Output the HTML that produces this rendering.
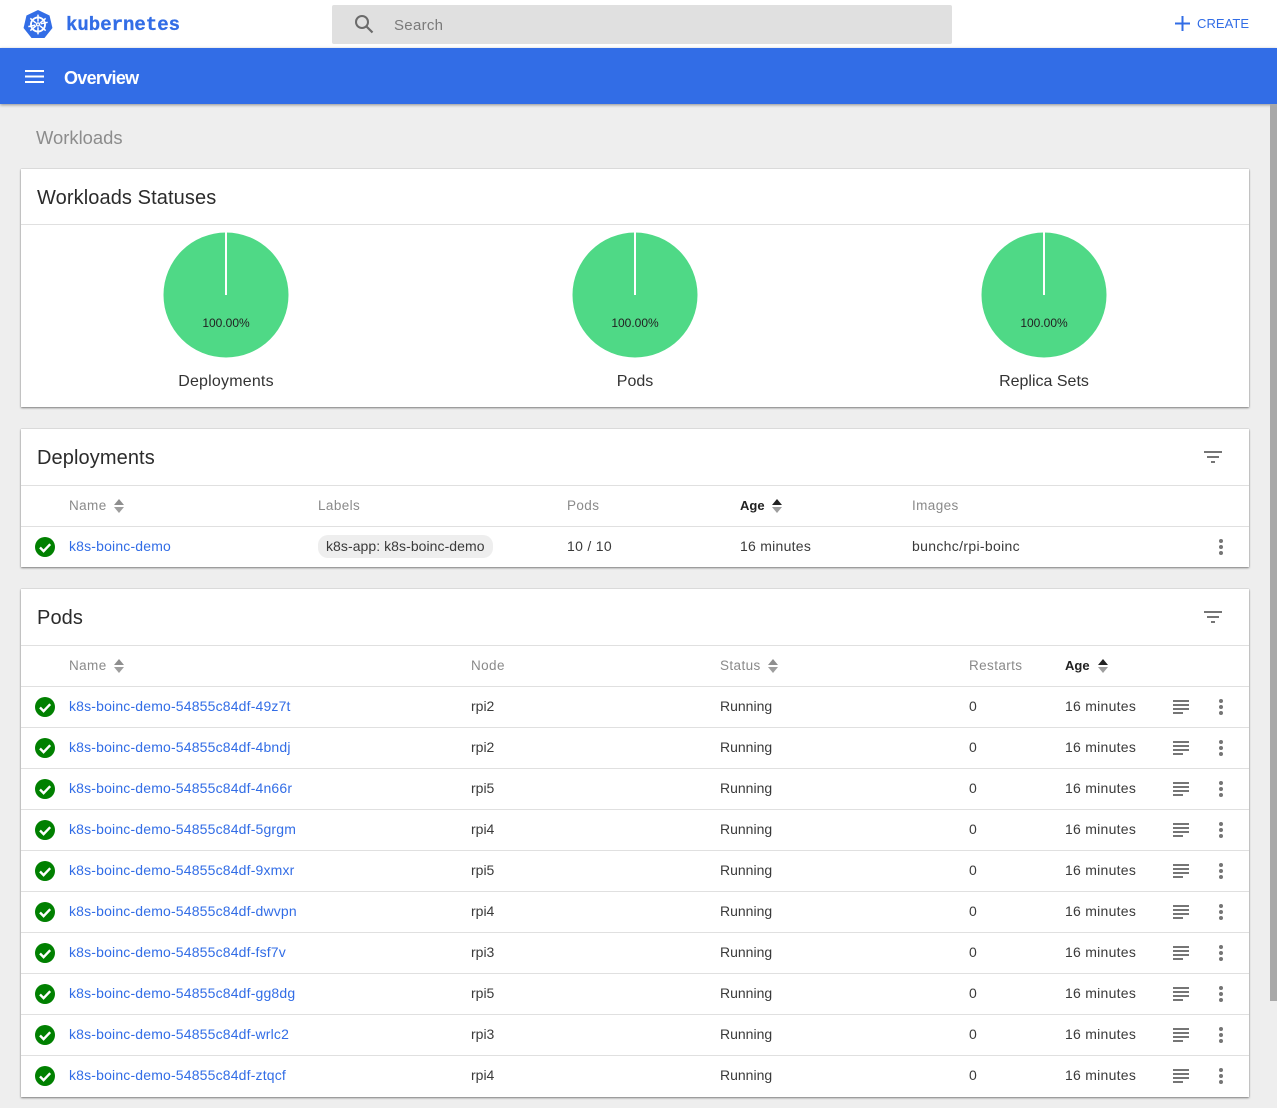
<!DOCTYPE html>
<html><head><meta charset="utf-8"><style>
html,body{margin:0;padding:0;width:1277px;height:1108px;overflow:hidden;background:#eee;font-family:"Liberation Sans",sans-serif;color:rgba(0,0,0,.87)}
.a{position:absolute}
.t{position:absolute;white-space:nowrap;line-height:20px;font-size:14px;color:#3a3a3a}
.m{letter-spacing:.26px}
.w{letter-spacing:.33px}
.h{position:absolute;white-space:nowrap;line-height:20px;font-size:13.5px;color:#8a8a8a;margin-top:1px;letter-spacing:.4px}
.b{color:#222;font-weight:bold;letter-spacing:0;font-size:13px}
.l{position:absolute;white-space:nowrap;line-height:20px;font-size:14px;color:#326de6;letter-spacing:.17px}
.card{position:absolute;left:21px;width:1228px;background:#fff;box-shadow:0 1px 2px rgba(0,0,0,.45),0 0 1px rgba(0,0,0,.25)}
.d{position:absolute;left:21px;width:1228px;height:1px;background:#e0e0e0}
.ti{position:absolute;left:37px;font-size:20px;line-height:28px;color:#2b2b2b;white-space:nowrap;margin-top:1px;letter-spacing:.1px}
.pl{position:absolute;font-size:12px;line-height:14px;width:80px;text-align:center;color:#222}
.cp{position:absolute;font-size:16px;line-height:20px;width:160px;text-align:center;color:#333}
svg{position:absolute;display:block}
</style></head><body>
<svg width="0" height="0" style="position:absolute"><defs>
<g id="ok"><circle cx="10" cy="10" r="10" fill="#008000"/><path d="M5 10.5l3.6 3.6L15.2 7.2" fill="none" stroke="#fff" stroke-width="2.4"/></g>
<g id="menu"><rect x="9" y="0" width="4" height="4" rx="2" fill="#757575"/><rect x="9" y="6" width="4" height="4" rx="2" fill="#757575"/><rect x="9" y="12" width="4" height="4" rx="2" fill="#757575"/></g>
<g id="log" fill="#757575"><rect y="0" width="16" height="2"/><rect y="4" width="16" height="2"/><rect y="8" width="16" height="2"/><rect y="12" width="10" height="2"/></g>
<g id="sort"><path d="M5 0L10 6H0z" fill="#8e8e8e"/><path d="M0 8h10L5 14z" fill="#9e9e9e"/></g>
<g id="sorta"><path d="M5 0L10 6H0z" fill="#222"/><path d="M0 8h10L5 14z" fill="#9e9e9e"/></g>
<g id="filter" fill="#757575"><rect x="0" y="0" width="18" height="2"/><rect x="3" y="5" width="12" height="2"/><rect x="7" y="10" width="4" height="2"/></g>
</defs></svg>

<div class="a" style="left:0;top:0;width:1277px;height:48px;background:#fff"></div>
<svg style="left:23px;top:9px" width="30" height="30" viewBox="0 0 32 31"><path d="M16 .5L28.300 6.400 31.400 19.700 22.900 30.400H9.100L.6 19.700 3.700 6.400z" fill="#326de6"/><g fill="none" stroke="#fff"><circle cx="16" cy="16" r="7.500" stroke-width="2"/><circle cx="16" cy="16" r="1.600" stroke-width="1.500"/><path d="M16 5.500V13M16 19v7.500M7.800 9.500l6 5M18.200 17.500l6 5M24.200 9.500l-6 5M13.800 17.500l-6 5M5.700 18.300l7.300-1.600M19 15.300l7.300-1.600" stroke-width="1.600"/></g></svg>
<div class="a" style="left:66px;top:12px;font:bold 19px/26px 'Liberation Mono',monospace;color:#326de6;white-space:nowrap;-webkit-text-stroke:.3px #326de6">kubernetes</div>
<div class="a" style="left:332px;top:5px;width:620px;height:39px;background:#e0e0e0;border-radius:2px"></div>
<svg style="left:353px;top:13px" width="22" height="22" viewBox="0 0 22 22"><circle cx="9" cy="9" r="6" fill="none" stroke="#6b6b6b" stroke-width="2"/><path d="M13.500 13.500L19.500 19.500" stroke="#6b6b6b" stroke-width="2.200"/></svg>
<div class="a" style="left:394px;top:16px;font-size:15px;line-height:20px;color:#7a7a7a;letter-spacing:.3px">Search</div>
<svg style="left:1175px;top:16px" width="15" height="15"><path d="M0 7.500H15M7.500 0V15" stroke="#326de6" stroke-width="2"/></svg>
<div class="a" style="left:1197px;top:14px;font-size:13px;line-height:20px;color:#326de6;letter-spacing:.05px">CREATE</div>

<div class="a" style="left:0;top:48px;width:1277px;height:56px;background:#326de6;box-shadow:0 1px 3px rgba(0,0,0,.4)"></div>
<svg style="left:25px;top:70px" width="19" height="13"><path d="M0 1h19M0 6.500h19M0 12h19" stroke="#fff" stroke-width="2"/></svg>
<div class="a" style="left:64px;top:66px;font-size:18px;font-weight:bold;line-height:24px;color:#fff;letter-spacing:-.7px">Overview</div>

<div class="a" style="left:1270px;top:104px;width:7px;height:897px;background:#a8a8a8"></div>
<div class="a" style="left:36px;top:126px;font-size:18.400px;line-height:24px;color:#8c8c8c">Workloads</div>

<div class="card" style="top:169px;height:238px"></div>
<div class="ti" style="top:183px">Workloads Statuses</div>
<div class="d" style="top:224px"></div>
<svg style="left:163px;top:232px" width="126" height="126"><circle cx="63" cy="63" r="62.500" fill="#4fd986"/><rect x="62" y="0" width="2" height="63" fill="#fff"/></svg>
<svg style="left:572px;top:232px" width="126" height="126"><circle cx="63" cy="63" r="62.500" fill="#4fd986"/><rect x="62" y="0" width="2" height="63" fill="#fff"/></svg>
<svg style="left:981px;top:232px" width="126" height="126"><circle cx="63" cy="63" r="62.500" fill="#4fd986"/><rect x="62" y="0" width="2" height="63" fill="#fff"/></svg>
<div class="pl" style="left:186px;top:316px">100.00%</div>
<div class="pl" style="left:595px;top:316px">100.00%</div>
<div class="pl" style="left:1004px;top:316px">100.00%</div>
<div class="cp" style="left:146px;top:372px;letter-spacing:.2px">Deployments</div>
<div class="cp" style="left:555px;top:372px">Pods</div>
<div class="cp" style="left:964px;top:372px">Replica Sets</div>

<div class="card" style="top:429px;height:138px"></div>
<div class="ti" style="top:443px">Deployments</div>
<svg style="left:1204px;top:451px" width="18" height="12"><use href="#filter"/></svg>
<div class="d" style="top:485px"></div>
<div class="d" style="top:526px"></div>
<div class="h" style="left:69px;top:495px">Name</div><svg style="left:114px;top:499px" width="10" height="14"><use href="#sort"/></svg>
<div class="h" style="left:318px;top:495px">Labels</div>
<div class="h" style="left:567px;top:495px">Pods</div>
<div class="h b" style="left:740px;top:495px">Age</div><svg style="left:772px;top:499px" width="10" height="14"><use href="#sorta"/></svg>
<div class="h" style="left:912px;top:495px">Images</div>
<svg style="left:35px;top:537px" width="20" height="20"><use href="#ok"/></svg>
<div class="l" style="left:69px;top:536px">k8s-boinc-demo</div>
<div class="a" style="left:318px;top:535px;width:175px;height:23px;border-radius:10px;background:#eee"></div>
<div class="t" style="left:326px;top:536px;letter-spacing:.06px">k8s-app: k8s-boinc-demo</div>
<div class="t" style="left:567px;top:536px;letter-spacing:.3px">10 / 10</div>
<div class="t m" style="left:740px;top:536px">16 minutes</div>
<div class="t w" style="left:912px;top:536px">bunchc/rpi-boinc</div>
<svg style="left:1210px;top:539px" width="22" height="16"><use href="#menu"/></svg>

<div class="card" style="top:589px;height:508px"></div>
<div class="ti" style="top:603px">Pods</div>
<svg style="left:1204px;top:611px" width="18" height="12"><use href="#filter"/></svg>
<div class="d" style="top:645px"></div>
<div class="h" style="left:69px;top:655px">Name</div><svg style="left:114px;top:659px" width="10" height="14"><use href="#sort"/></svg>
<div class="h" style="left:471px;top:655px">Node</div>
<div class="h" style="left:720px;top:655px">Status</div><svg style="left:768px;top:659px" width="10" height="14"><use href="#sort"/></svg>
<div class="h" style="left:969px;top:655px">Restarts</div>
<div class="h b" style="left:1065px;top:655px">Age</div><svg style="left:1098px;top:659px" width="10" height="14"><use href="#sorta"/></svg>

<div class="d" style="top:686px"></div>
<svg style="left:35px;top:697px" width="20" height="20"><use href="#ok"/></svg>
<div class="l" style="left:69px;top:696px">k8s-boinc-demo-54855c84df-49z7t</div>
<div class="t" style="left:471px;top:696px">rpi2</div><div class="t" style="left:720px;top:696px">Running</div><div class="t" style="left:969px;top:696px">0</div><div class="t m" style="left:1065px;top:696px">16 minutes</div>
<svg style="left:1173px;top:700px" width="16" height="14"><use href="#log"/></svg><svg style="left:1210px;top:699px" width="22" height="16"><use href="#menu"/></svg>

<div class="d" style="top:727px"></div>
<svg style="left:35px;top:738px" width="20" height="20"><use href="#ok"/></svg>
<div class="l" style="left:69px;top:737px">k8s-boinc-demo-54855c84df-4bndj</div>
<div class="t" style="left:471px;top:737px">rpi2</div><div class="t" style="left:720px;top:737px">Running</div><div class="t" style="left:969px;top:737px">0</div><div class="t m" style="left:1065px;top:737px">16 minutes</div>
<svg style="left:1173px;top:741px" width="16" height="14"><use href="#log"/></svg><svg style="left:1210px;top:740px" width="22" height="16"><use href="#menu"/></svg>

<div class="d" style="top:768px"></div>
<svg style="left:35px;top:779px" width="20" height="20"><use href="#ok"/></svg>
<div class="l" style="left:69px;top:778px">k8s-boinc-demo-54855c84df-4n66r</div>
<div class="t" style="left:471px;top:778px">rpi5</div><div class="t" style="left:720px;top:778px">Running</div><div class="t" style="left:969px;top:778px">0</div><div class="t m" style="left:1065px;top:778px">16 minutes</div>
<svg style="left:1173px;top:782px" width="16" height="14"><use href="#log"/></svg><svg style="left:1210px;top:781px" width="22" height="16"><use href="#menu"/></svg>

<div class="d" style="top:809px"></div>
<svg style="left:35px;top:820px" width="20" height="20"><use href="#ok"/></svg>
<div class="l" style="left:69px;top:819px">k8s-boinc-demo-54855c84df-5grgm</div>
<div class="t" style="left:471px;top:819px">rpi4</div><div class="t" style="left:720px;top:819px">Running</div><div class="t" style="left:969px;top:819px">0</div><div class="t m" style="left:1065px;top:819px">16 minutes</div>
<svg style="left:1173px;top:823px" width="16" height="14"><use href="#log"/></svg><svg style="left:1210px;top:822px" width="22" height="16"><use href="#menu"/></svg>

<div class="d" style="top:850px"></div>
<svg style="left:35px;top:861px" width="20" height="20"><use href="#ok"/></svg>
<div class="l" style="left:69px;top:860px">k8s-boinc-demo-54855c84df-9xmxr</div>
<div class="t" style="left:471px;top:860px">rpi5</div><div class="t" style="left:720px;top:860px">Running</div><div class="t" style="left:969px;top:860px">0</div><div class="t m" style="left:1065px;top:860px">16 minutes</div>
<svg style="left:1173px;top:864px" width="16" height="14"><use href="#log"/></svg><svg style="left:1210px;top:863px" width="22" height="16"><use href="#menu"/></svg>

<div class="d" style="top:891px"></div>
<svg style="left:35px;top:902px" width="20" height="20"><use href="#ok"/></svg>
<div class="l" style="left:69px;top:901px">k8s-boinc-demo-54855c84df-dwvpn</div>
<div class="t" style="left:471px;top:901px">rpi4</div><div class="t" style="left:720px;top:901px">Running</div><div class="t" style="left:969px;top:901px">0</div><div class="t m" style="left:1065px;top:901px">16 minutes</div>
<svg style="left:1173px;top:905px" width="16" height="14"><use href="#log"/></svg><svg style="left:1210px;top:904px" width="22" height="16"><use href="#menu"/></svg>

<div class="d" style="top:932px"></div>
<svg style="left:35px;top:943px" width="20" height="20"><use href="#ok"/></svg>
<div class="l" style="left:69px;top:942px">k8s-boinc-demo-54855c84df-fsf7v</div>
<div class="t" style="left:471px;top:942px">rpi3</div><div class="t" style="left:720px;top:942px">Running</div><div class="t" style="left:969px;top:942px">0</div><div class="t m" style="left:1065px;top:942px">16 minutes</div>
<svg style="left:1173px;top:946px" width="16" height="14"><use href="#log"/></svg><svg style="left:1210px;top:945px" width="22" height="16"><use href="#menu"/></svg>

<div class="d" style="top:973px"></div>
<svg style="left:35px;top:984px" width="20" height="20"><use href="#ok"/></svg>
<div class="l" style="left:69px;top:983px">k8s-boinc-demo-54855c84df-gg8dg</div>
<div class="t" style="left:471px;top:983px">rpi5</div><div class="t" style="left:720px;top:983px">Running</div><div class="t" style="left:969px;top:983px">0</div><div class="t m" style="left:1065px;top:983px">16 minutes</div>
<svg style="left:1173px;top:987px" width="16" height="14"><use href="#log"/></svg><svg style="left:1210px;top:986px" width="22" height="16"><use href="#menu"/></svg>

<div class="d" style="top:1014px"></div>
<svg style="left:35px;top:1025px" width="20" height="20"><use href="#ok"/></svg>
<div class="l" style="left:69px;top:1024px">k8s-boinc-demo-54855c84df-wrlc2</div>
<div class="t" style="left:471px;top:1024px">rpi3</div><div class="t" style="left:720px;top:1024px">Running</div><div class="t" style="left:969px;top:1024px">0</div><div class="t m" style="left:1065px;top:1024px">16 minutes</div>
<svg style="left:1173px;top:1028px" width="16" height="14"><use href="#log"/></svg><svg style="left:1210px;top:1027px" width="22" height="16"><use href="#menu"/></svg>

<div class="d" style="top:1055px"></div>
<svg style="left:35px;top:1066px" width="20" height="20"><use href="#ok"/></svg>
<div class="l" style="left:69px;top:1065px">k8s-boinc-demo-54855c84df-ztqcf</div>
<div class="t" style="left:471px;top:1065px">rpi4</div><div class="t" style="left:720px;top:1065px">Running</div><div class="t" style="left:969px;top:1065px">0</div><div class="t m" style="left:1065px;top:1065px">16 minutes</div>
<svg style="left:1173px;top:1069px" width="16" height="14"><use href="#log"/></svg><svg style="left:1210px;top:1068px" width="22" height="16"><use href="#menu"/></svg>
</body></html>
